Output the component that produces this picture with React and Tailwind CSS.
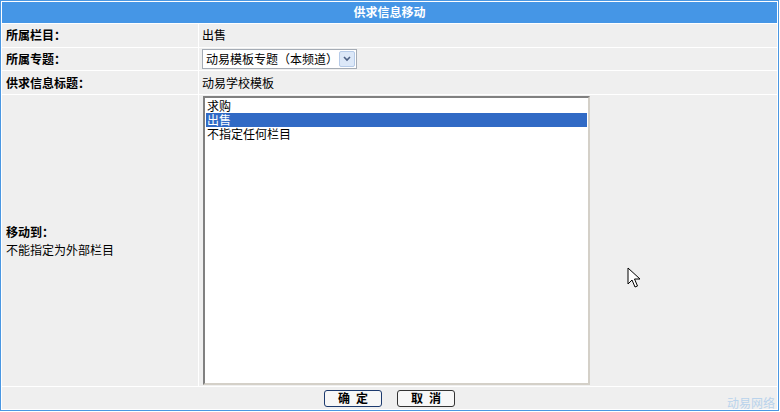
import React from 'react';

const font = { fontFamily: '"Noto Sans CJK SC", "Noto Sans", sans-serif' };

const Row = ({ label, children, className = '' }) => (
  <div className={`flex gap-px ${className}`}>
    <div className="w-[196px] shrink-0 bg-[#efefef] pl-[4px] flex items-center font-bold">{label}</div>
    <div className="flex-1 bg-[#efefef] pl-[3px] flex items-center">{children}</div>
  </div>
);

const Cursor = () => (
  <svg className="absolute left-[627px] top-[267px]" width="14" height="22" viewBox="0 0 14 22">
    <path
      d="M1 1 L1 17 L5 13 L8 20 L10.5 19 L7.5 12 L13 12 Z"
      fill="#fff"
      stroke="#000"
      strokeWidth="1"
      strokeLinejoin="miter"
    />
  </svg>
);

export default function App() {
  const options = ['求购', '出售', '不指定任何栏目'];
  return (
    <div className="relative w-[780px] h-[412px] bg-white text-[12px] text-black leading-none" style={font}>
      <div className="w-[779px] h-[411px] border border-[#4a97e2] bg-white p-px flex flex-col gap-px">
        <div className="h-[21px] bg-[#4596e6] text-white font-bold text-[12px] flex items-center justify-center">
          供求信息移动
        </div>
        <Row label="所属栏目：" className="h-[23px]">
          出售
        </Row>
        <Row label="所属专题：" className="h-[23px]">
          <div className="flex items-center w-[155px] h-[20px] bg-white border border-[#a5acb5] pl-[3px]">
            <span className="flex-1">动易模板专题（本频道）</span>
            <span className="w-[16px] h-[16px] mr-px bg-[#dce8f8] border border-[#b6cbe8] rounded-[2px] flex items-center justify-center">
              <svg width="8" height="6" viewBox="0 0 8 6">
                <path d="M1 1 L4 4 L7 1" fill="none" stroke="#4d6185" strokeWidth="1.6" />
              </svg>
            </span>
          </div>
        </Row>
        <Row label="供求信息标题：" className="h-[23px]">
          <span className="font-normal">动易学校模板</span>
        </Row>
        <div className="flex gap-px flex-1">
          <div className="w-[196px] shrink-0 bg-[#efefef] pl-[4px] pt-[131px]">
            <div className="font-bold">移动到：</div>
            <div className="mt-[6px]">不能指定为外部栏目</div>
          </div>
          <div className="flex-1 bg-[#efefef] pl-[4px] py-[1px]">
            <div className="w-[387px] h-[289px] bg-white border-2 border-t-[#808080] border-l-[#808080] border-r-[#d4d0c8] border-b-[#d4d0c8] pt-px px-px">
              {options.map((o, i) => (
                <div
                  key={o}
                  className={`h-[14px] leading-[14px] pl-[1px] ${i === 1 ? 'bg-[#316ac5] text-white' : ''}`}
                >
                  {o}
                </div>
              ))}
            </div>
          </div>
        </div>
        <div className="h-[22px] bg-[#efefef] flex items-center justify-center gap-[15px] relative">
          <button className="w-[58px] h-[17px] bg-[#f7f7f7] border border-[#1c3a6e] rounded-[3px] text-[12px] font-bold leading-none tracking-[6px] pl-[6px]">
            确定
          </button>
          <button className="w-[58px] h-[17px] bg-[#f7f7f7] border border-[#333] rounded-[3px] text-[12px] font-bold leading-none tracking-[6px] pl-[6px]">
            取消
          </button>
          <span className="absolute right-[2px] bottom-[0px] text-[12px] text-[#b9d3ec]">动易网络</span>
        </div>
      </div>
      <Cursor />
    </div>
  );
}
